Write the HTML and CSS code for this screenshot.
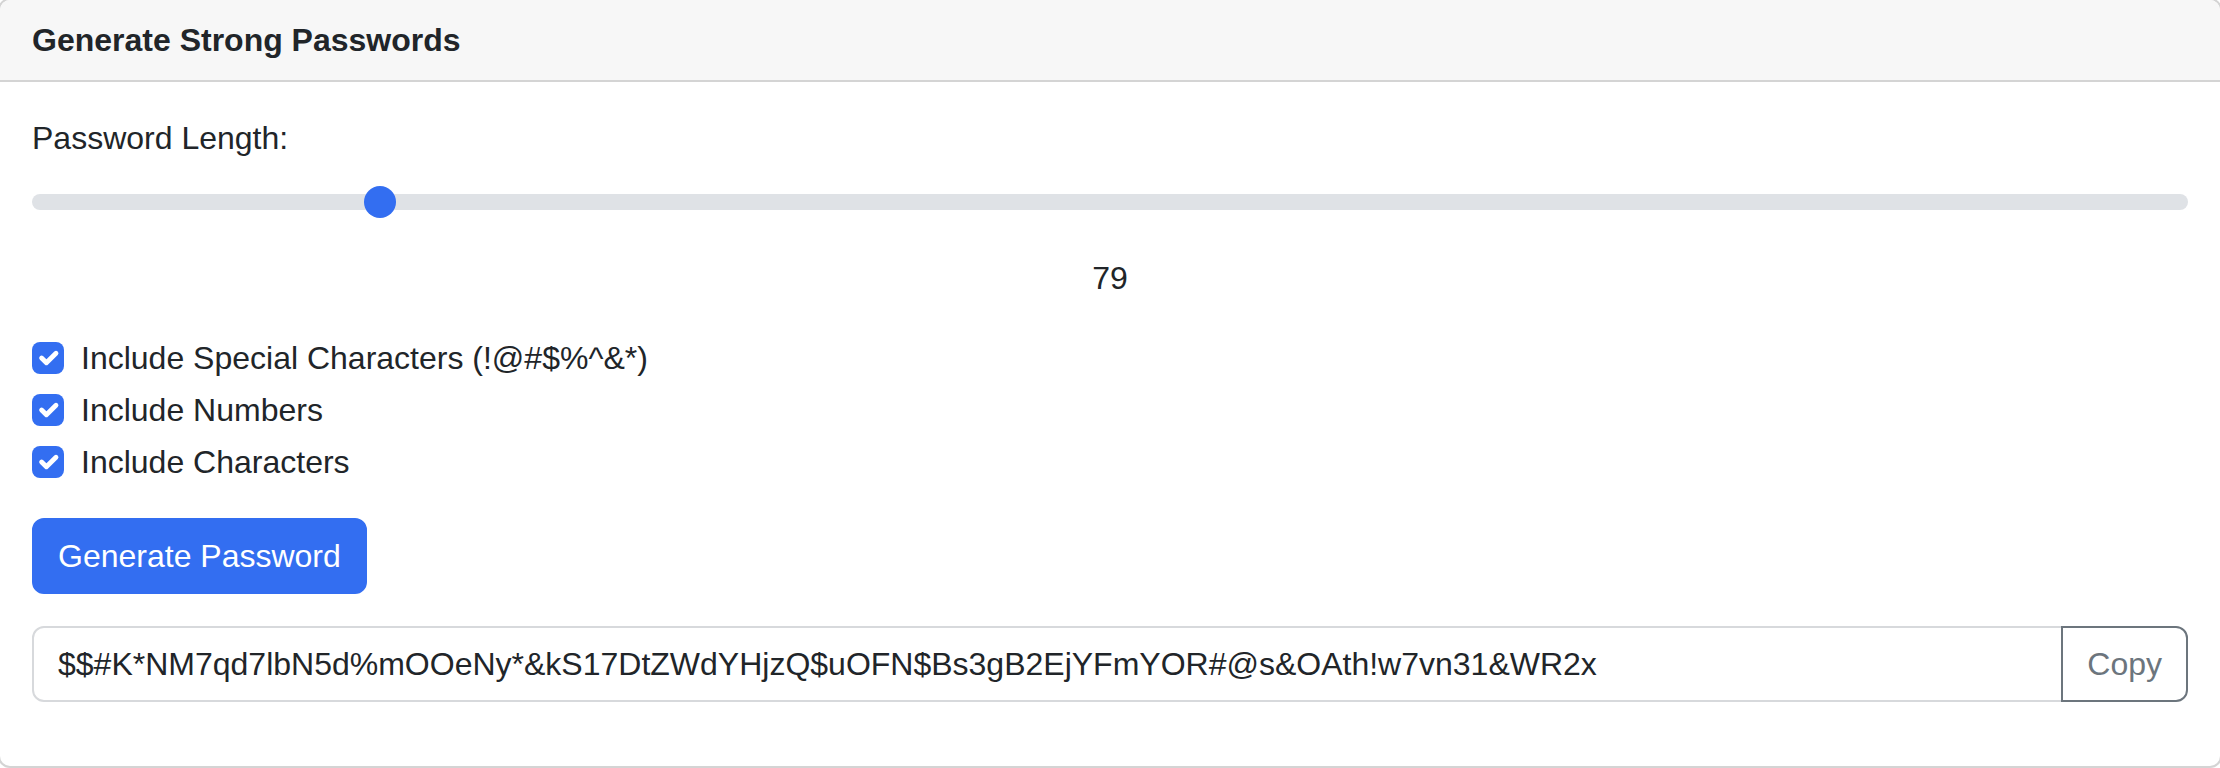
FILE: index.html
```html
<!DOCTYPE html>
<html lang="en">
<head>
<meta charset="utf-8">
<title>Generate Strong Passwords</title>
<link rel="stylesheet" href="styles.css">
</head>
<body>
<div class="card">
  <div class="card-header">Generate Strong Passwords</div>
  <div class="card-body">
    <label class="form-label" for="length">Password Length:</label>
    <input type="range" class="form-range" id="length" min="1" max="500" value="79">
    <div class="length-value">79</div>

    <div class="form-check">
      <span class="check-box"><svg viewBox="0 0 20 20"><path d="M6 10l3 3l6-6"/></svg></span>
      <span class="check-label">Include Special Characters (!@#$%^&amp;*)</span>
    </div>
    <div class="form-check">
      <span class="check-box"><svg viewBox="0 0 20 20"><path d="M6 10l3 3l6-6"/></svg></span>
      <span class="check-label">Include Numbers</span>
    </div>
    <div class="form-check last">
      <span class="check-box"><svg viewBox="0 0 20 20"><path d="M6 10l3 3l6-6"/></svg></span>
      <span class="check-label">Include Characters</span>
    </div>

    <button class="btn btn-primary" type="button">Generate Password</button>

    <div class="input-group">
      <input type="text" class="form-control" readonly value="$$#K*NM7qd7lbN5d%mOOeNy*&amp;kS17DtZWdYHjzQ$uOFN$Bs3gB2EjYFmYOR#@s&amp;OAth!w7vn31&amp;WR2x">
      <button class="btn btn-outline" type="button">Copy</button>
    </div>
  </div>
</div>
</body>
</html>
```

FILE: styles.css
```css
* {
  box-sizing: border-box;
}

html, body {
  margin: 0;
  padding: 0;
  background: #ffffff;
}

body {
  font-family: "Liberation Sans", Arial, sans-serif;
  font-size: 32px;
  line-height: 48px;
  color: #212529;
  overflow: hidden;
}

.card {
  margin: -2px -2px 0 -2px;
  border: 2px solid #d4d4d4;
  border-radius: 12px;
  background: #ffffff;
  overflow: hidden;
}

.card-header {
  padding: 16px 32px;
  background: #f7f7f7;
  border-bottom: 2px solid #d4d4d4;
  font-weight: 700;
}

.card-body {
  padding: 32px;
}

.form-label {
  display: block;
  margin-bottom: 16px;
}

.form-range {
  display: block;
  width: 100%;
  height: 48px;
  margin: 0;
  padding: 0;
  background: transparent;
  -webkit-appearance: none;
  appearance: none;
}

.form-range::-webkit-slider-runnable-track {
  height: 16px;
  border-radius: 16px;
  background: #dfe2e6;
}

.form-range::-webkit-slider-thumb {
  -webkit-appearance: none;
  appearance: none;
  width: 32px;
  height: 32px;
  margin-top: -8px;
  border: 0;
  border-radius: 50%;
  background: #336ef1;
}

.form-range::-moz-range-track {
  height: 16px;
  border-radius: 16px;
  background: #dfe2e6;
}

.form-range::-moz-range-thumb {
  width: 32px;
  height: 32px;
  border: 0;
  border-radius: 50%;
  background: #336ef1;
}

.length-value {
  margin-top: 28px;
  margin-bottom: 32px;
  text-align: center;
}

.form-check {
  display: flex;
  align-items: flex-start;
  gap: 17px;
  min-height: 48px;
  margin-bottom: 4px;
}

.form-check.last {
  margin-bottom: 32px;
}

.check-box {
  flex: none;
  width: 32px;
  height: 32px;
  margin-top: 8px;
  border-radius: 8px;
  background: #336ef1;
  display: flex;
}

.check-box svg {
  width: 32px;
  height: 32px;
  fill: none;
  stroke: #ffffff;
  stroke-width: 3;
  stroke-linecap: round;
  stroke-linejoin: round;
}

.btn {
  font-family: inherit;
  font-size: 32px;
  line-height: 48px;
  padding: 12px 24px;
  border: 2px solid transparent;
  border-radius: 12px;
  margin: 0;
  cursor: pointer;
}

.btn-primary {
  display: block;
  color: #ffffff;
  background: #336ef1;
  border-color: #336ef1;
}

.input-group {
  display: flex;
  margin-top: 32px;
  margin-bottom: 32px;
}

.form-control {
  flex: 1 1 auto;
  min-width: 0;
  font-family: inherit;
  font-size: 32px;
  line-height: 48px;
  color: #212529;
  padding: 12px 24px;
  border: 2px solid #d7d9dc;
  border-radius: 12px 0 0 12px;
  margin: 0;
  outline: none;
  background: #ffffff;
}

.btn-outline {
  flex: none;
  color: #6c757d;
  background: #ffffff;
  border-color: #6c757d;
  border-radius: 0 12px 12px 0;
  margin-left: -2px;
}
```
